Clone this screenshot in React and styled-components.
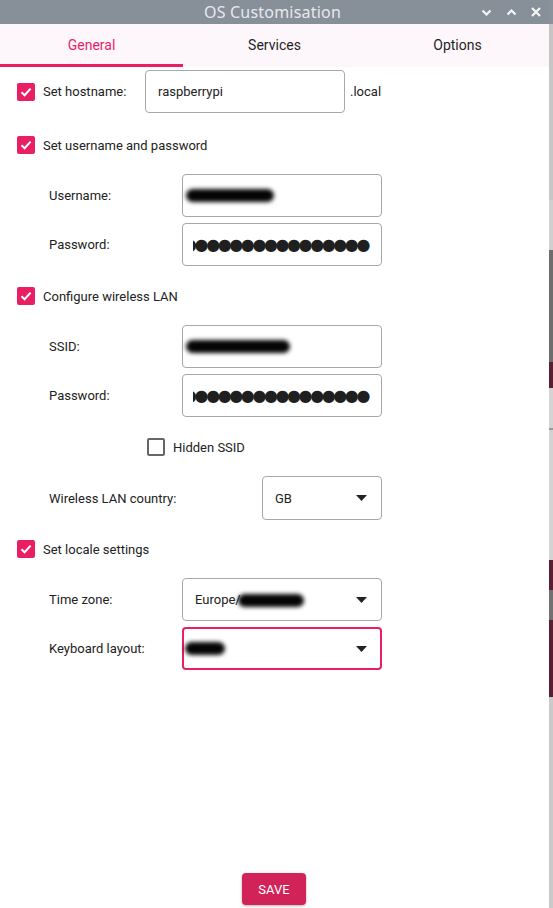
import React from "react";
import styled, { createGlobalStyle } from "styled-components";

const GlobalStyle = createGlobalStyle`
  html, body {
    margin: 0;
    padding: 0;
    background: #ffffff;
  }
  body {
    font-family: Roboto, "Liberation Sans", sans-serif;
    color: #222;
  }
`;

const PINK = "#e91e63";

function Chevron({ up }) {
  return (
    <svg width="11" height="7" viewBox="0 0 11 7">
      <path
        d={up ? "M1.5 5.5 L5.5 1.5 L9.5 5.5" : "M1.5 1.5 L5.5 5.5 L9.5 1.5"}
        fill="none"
        stroke="#f4f5f7"
        strokeWidth="2.2"
      />
    </svg>
  );
}

function CloseIcon() {
  return (
    <svg width="10" height="10" viewBox="0 0 10 10">
      <path d="M1 1 L9 9 M9 1 L1 9" stroke="#f4f5f7" strokeWidth="2.2" />
    </svg>
  );
}

function CheckBox({ checked }) {
  return (
    <Box checked={checked}>
      {checked && (
        <svg width="14" height="14" viewBox="0 0 14 14">
          <path
            d="M2.5 7.2 L5.6 10.2 L11.6 3.6"
            fill="none"
            stroke="#fff"
            strokeWidth="2.1"
          />
        </svg>
      )}
    </Box>
  );
}

function Arrow() {
  return (
    <svg width="11" height="6" viewBox="0 0 11 6">
      <path d="M0 0 L11 0 L5.5 6 Z" fill="#222" />
    </svg>
  );
}

// masked password, scrolled so the first dot is cut by the field edge
function Dots() {
  return (
    <DotsClip>
      <DotsText>{"●".repeat(18)}</DotsText>
    </DotsClip>
  );
}

function App() {
  return (
    <Screen>
      <GlobalStyle />
      <Window>
        <TitleBar>
          <Title>OS Customisation</Title>
          <TitleButtons>
            <Chevron />
            <Chevron up />
            <CloseIcon />
          </TitleButtons>
        </TitleBar>

        <Tabs>
          <Tab active>General</Tab>
          <Tab>Services</Tab>
          <Tab>Options</Tab>
        </Tabs>

        <Content>
          <HostRow>
            <CheckBox checked />
            <HostLabel>Set hostname:</HostLabel>
            <Field width={200}>raspberrypi</Field>
            <Suffix>.local</Suffix>
          </HostRow>

          <CheckRow top={23}>
            <CheckBox checked />
            <CheckText>Set username and password</CheckText>
          </CheckRow>
          <FieldGroup>
            <FieldRow>
              <FieldLabel>Username:</FieldLabel>
              <Field width={200}>
                <Blob w={88} shift={-9} />
              </Field>
            </FieldRow>
            <FieldRow>
              <FieldLabel>Password:</FieldLabel>
              <Field width={200}>
                <Dots />
              </Field>
            </FieldRow>
          </FieldGroup>

          <CheckRow top={21}>
            <CheckBox checked />
            <CheckText>Configure wireless LAN</CheckText>
          </CheckRow>
          <FieldGroup>
            <FieldRow>
              <FieldLabel>SSID:</FieldLabel>
              <Field width={200}>
                <Blob w={104} shift={-9} />
              </Field>
            </FieldRow>
            <FieldRow>
              <FieldLabel>Password:</FieldLabel>
              <Field width={200}>
                <Dots />
              </Field>
            </FieldRow>
          </FieldGroup>

          <CheckRow top={21} indent={130}>
            <CheckBox />
            <CheckText>Hidden SSID</CheckText>
          </CheckRow>

          <FieldGroup>
            <FieldRow>
              <FieldLabel wide>Wireless LAN country:</FieldLabel>
              <Select width={120} tall>
                <span>GB</span>
                <Arrow />
              </Select>
            </FieldRow>
          </FieldGroup>

          <CheckRow top={20}>
            <CheckBox checked />
            <CheckText>Set locale settings</CheckText>
          </CheckRow>
          <FieldGroup>
            <FieldRow>
              <FieldLabel>Time zone:</FieldLabel>
              <Select width={200}>
                <span>
                  Europe/<Blob w={66} shift={-3} />
                </span>
                <Arrow />
              </Select>
            </FieldRow>
            <FieldRow>
              <FieldLabel>Keyboard layout:</FieldLabel>
              <Select width={200} focused>
                <Blob w={40} shift={1} />
                <Arrow />
              </Select>
            </FieldRow>
          </FieldGroup>
        </Content>

        <Footer>
          <SaveButton>SAVE</SaveButton>
        </Footer>
      </Window>

      <Backdrop>
        <Slab h={24} color="#8a929b" />
        <Slab h={176} color="#c6c6c6" />
        <Slab h={50} color="#cfcfcf" />
        <Slab h={112} color="#6d6d6d" />
        <Slab h={26} color="#5b1f34" />
        <Slab h={40} color="#d4d4d4" />
        <Slab h={2} color="#9a9a9a" />
        <Slab h={130} color="#d3d3d3" />
        <Slab h={30} color="#5b1f34" />
        <Slab h={30} color="#717171" />
        <Slab h={77} color="#5b1f34" />
        <Slab h={211} color="#cacaca" />
      </Backdrop>
    </Screen>
  );
}

const Screen = styled.div`
  display: flex;
  width: 553px;
  height: 908px;
  overflow: hidden;
`;

const Window = styled.div`
  width: 549px;
  display: flex;
  flex-direction: column;
  background: #ffffff;
`;

const TitleBar = styled.div`
  position: relative;
  height: 24px;
  background: #878f99;
  display: flex;
  align-items: center;
  justify-content: center;
`;

const Title = styled.div`
  color: #e6e9ee;
  font-family: "Noto Sans", Roboto, sans-serif;
  font-size: 16px;
  letter-spacing: 0.2px;
  padding-right: 4px;
`;

const TitleButtons = styled.div`
  position: absolute;
  right: 8px;
  top: 0;
  height: 24px;
  display: flex;
  align-items: center;
  gap: 14px;
`;

const Tabs = styled.div`
  height: 43px;
  display: grid;
  grid-template-columns: repeat(3, 1fr);
  background: #fdf7fc;
`;

const Tab = styled.div`
  display: flex;
  align-items: center;
  justify-content: center;
  font-size: 14px;
  font-weight: 400;
  color: ${(p) => (p.active ? PINK : "#1f1f24")};
  border-bottom: 3px solid ${(p) => (p.active ? PINK : "transparent")};
  box-sizing: border-box;
  padding-top: 2px;
`;

const Content = styled.div`
  flex: 1;
  padding: 3px 0 0 17px;
  display: flex;
  flex-direction: column;
  align-items: flex-start;
  font-size: 13px;
`;

const HostRow = styled.div`
  display: flex;
  align-items: center;
  height: 43px;
`;

const HostLabel = styled.span`
  width: 102px;
  margin-left: 8px;
  color: #222;
`;

const Suffix = styled.span`
  margin-left: 5px;
  color: #222;
`;

const CheckRow = styled.div`
  display: flex;
  align-items: center;
  height: 18px;
  margin-top: ${(p) => p.top}px;
  margin-left: ${(p) => p.indent || 0}px;
`;

const Box = styled.div`
  width: 18px;
  height: 18px;
  box-sizing: border-box;
  border-radius: 2px;
  display: flex;
  align-items: center;
  justify-content: center;
  background: ${(p) => (p.checked ? PINK : "#fff")};
  border: ${(p) => (p.checked ? "none" : "2px solid #666")};
`;

const CheckText = styled.span`
  margin-left: 8px;
  color: #222;
`;

const FieldGroup = styled.div`
  margin-top: 20px;
  display: flex;
  flex-direction: column;
  gap: 6px;
`;

const FieldRow = styled.div`
  display: flex;
  align-items: center;
`;

const FieldLabel = styled.span`
  width: ${(p) => (p.wide ? 213 : 133)}px;
  margin-left: 32px;
  color: #222;
`;

const Field = styled.div`
  width: ${(p) => p.width}px;
  height: 43px;
  box-sizing: border-box;
  border: 1px solid #a8a8a8;
  border-radius: 4px;
  display: flex;
  align-items: center;
  padding: 0 10px 0 12px;
  color: #222;
  background: #fff;
`;

const Select = styled.div`
  width: ${(p) => p.width}px;
  height: ${(p) => (p.tall ? 44 : 43)}px;
  box-sizing: border-box;
  border: ${(p) => (p.focused ? `2px solid ${PINK}` : "1px solid #a8a8a8")};
  border-radius: 4px;
  display: flex;
  align-items: center;
  justify-content: space-between;
  padding: 0 ${(p) => (p.focused ? 13 : 14)}px 0 ${(p) => (p.focused ? 0 : 12)}px;
  color: #222;
  background: #fff;
`;

const Blob = styled.span`
  display: inline-block;
  vertical-align: middle;
  width: ${(p) => p.w}px;
  height: 13px;
  margin-left: ${(p) => p.shift}px;
  background: #050505;
  border-radius: 7px;
  filter: blur(2.3px);
`;

const DotsClip = styled.div`
  width: 179px;
  margin-left: -2px;
  overflow: hidden;
  display: flex;
  justify-content: flex-end;
`;

const DotsText = styled.span`
  white-space: nowrap;
  font-family: "DejaVu Sans", sans-serif;
  font-size: 16px;
  letter-spacing: -2.4px;
  color: #1f1f1f;
  padding-right: 3px;
`;

const Footer = styled.div`
  height: 35px;
  display: flex;
  justify-content: center;
  align-items: flex-start;
`;

const SaveButton = styled.button`
  width: 64px;
  height: 32px;
  margin-left: -1px;
  border: none;
  border-radius: 4px;
  background: #d12358;
  color: #fff;
  font-family: Roboto, sans-serif;
  font-size: 13px;
  box-shadow: 0 1px 3px rgba(0, 0, 0, 0.3);
`;

const Backdrop = styled.div`
  width: 4px;
  display: flex;
  flex-direction: column;
`;

const Slab = styled.div`
  height: ${(p) => p.h}px;
  flex-shrink: 0;
  background: ${(p) => p.color};
`;

export default App;
